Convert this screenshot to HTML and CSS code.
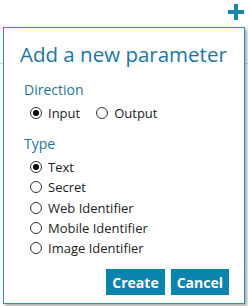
FILE: index.html
```html
<!DOCTYPE html>
<html lang="en">
  <head>
    <meta charset="UTF-8" />
    <title>Add a new parameter</title>
    <link rel="stylesheet" href="styles.css">
  </head>
  <body>
    <div class="toolbar">
      <button class="add-btn" title="Add parameter">
        <svg width="16" height="16" viewBox="0 0 16 16">
          <path d="M6 0h4v6h6v4h-6v6h-4v-6h-6v-4h6z" fill="#1a84ad" />
        </svg>
      </button>
    </div>
    <div class="backdrop">
      <div class="rule"></div>
      <div class="under-text">Name Type Direction Identifier</div>
    </div>

    <div class="popup">
      <h1>Add a new parameter</h1>
      <div class="group">
        <div class="group-label">Direction</div>
        <div class="row-inline">
          <label class="opt"><input type="radio" name="dir" checked> Input</label>
          <label class="opt"><input type="radio" name="dir"> Output</label>
        </div>
      </div>
      <div class="group">
        <div class="group-label">Type</div>
        <div class="col">
          <label class="opt"><input type="radio" name="type" checked> Text</label>
          <label class="opt"><input type="radio" name="type"> Secret</label>
          <label class="opt"><input type="radio" name="type"> Web Identifier</label>
          <label class="opt"><input type="radio" name="type"> Mobile Identifier</label>
          <label class="opt"><input type="radio" name="type"> Image Identifier</label>
        </div>
      </div>
      <div class="actions">
        <button class="btn">Create</button>
        <button class="btn">Cancel</button>
      </div>
    </div>
  </body>
</html>
```

FILE: styles.css
```css
body {
  margin: 0;
  font-family: "Open Sans", "Noto Sans", sans-serif;
  background: #fff;
  color: #222;
  position: relative;
  height: 306px;
  overflow: hidden;
}
.toolbar {
  display: flex;
  justify-content: flex-end;
  padding: 4px 4px 0 0;
  height: 23px;
}
.add-btn {
  border: none;
  background: none;
  padding: 0;
  width: 16px;
  height: 16px;
}
.backdrop {
  padding-top: 36px;
}
.rule {
  border-top: 1px solid #d6d6d6;
}
.under-text {
  margin-top: 240px;
  padding-left: 20px;
  font-size: 12px;
  line-height: 16px;
  color: #7d8d98;
  white-space: nowrap;
}
.popup {
  position: absolute;
  left: 3px;
  top: 27px;
  bottom: 2px;
  width: 205px;
  border: 1px solid #2a8cc0;
  background: #fff;
  box-shadow: 2px 2px 3px rgba(0, 0, 0, 0.35);
  padding: 0 15px 0 20px;
  display: flex;
  flex-direction: column;
  z-index: 2;
}
h1 {
  font-weight: normal;
  font-size: 20.5px;
  color: #1a76a2;
  margin: 12px 0 12px -4px;
  white-space: nowrap;
}
.group {
  margin-bottom: 11px;
}
.group-label {
  color: #1a76a2;
  font-size: 14px;
  margin-bottom: 4px;
}
.row-inline {
  display: flex;
  gap: 10px;
}
.col {
  display: flex;
  flex-direction: column;
}
.opt {
  font-size: 13px;
  display: flex;
  align-items: center;
  height: 20.2px;
}
.opt input {
  appearance: none;
  -webkit-appearance: none;
  margin: 0 6px 0 6px;
  width: 12px;
  height: 12px;
  border: 1px solid #333;
  border-radius: 50%;
  background: #fff;
}
.opt input:checked {
  background: radial-gradient(circle, #111 0 2.8px, #fff 3.3px);
}
.actions {
  margin-top: auto;
  margin-bottom: 10px;
  display: flex;
  justify-content: flex-end;
  gap: 6px;
}
.btn {
  font-family: inherit;
  font-size: 14px;
  font-weight: bold;
  color: #fff;
  background: #0a84ad;
  border: none;
  height: 26px;
  padding: 0 6px;
}
```
